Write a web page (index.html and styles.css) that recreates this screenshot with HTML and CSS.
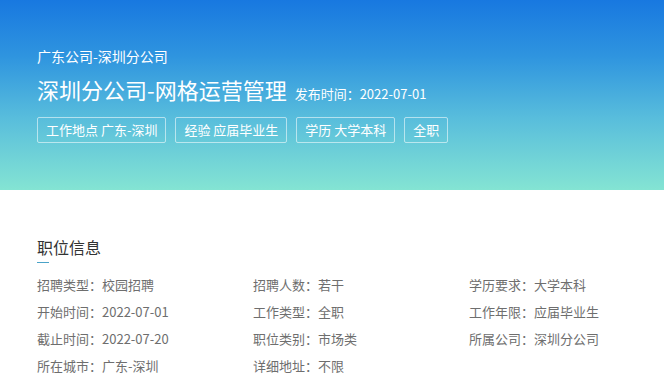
FILE: index.html
```html
<!DOCTYPE html>
<html lang="zh-CN">

<head>
    <meta charset="UTF-8">
    <meta name="viewport" content="width=device-width, initial-scale=1.0">
    <title>深圳分公司-网格运营管理</title>
    <link rel="stylesheet" href="styles.css">
</head>

<body>
    <div class="banner">
        <div class="company">广东公司-深圳分公司</div>
        <div class="title-line">
            <h1>深圳分公司-网格运营管理</h1>
            <span class="pub-date">发布时间：2022-07-01</span>
        </div>
        <div class="tags">
            <span class="tag">工作地点 广东-深圳</span>
            <span class="tag">经验 应届毕业生</span>
            <span class="tag">学历 大学本科</span>
            <span class="tag">全职</span>
        </div>
    </div>

    <div class="info">
        <h2>职位信息</h2>
        <div class="underline"></div>
        <div class="info-grid">
            <div class="item">招聘类型：校园招聘</div>
            <div class="item">招聘人数：若干</div>
            <div class="item">学历要求：大学本科</div>
            <div class="item">开始时间：2022-07-01</div>
            <div class="item">工作类型：全职</div>
            <div class="item">工作年限：应届毕业生</div>
            <div class="item">截止时间：2022-07-20</div>
            <div class="item">职位类别：市场类</div>
            <div class="item">所属公司：深圳分公司</div>
            <div class="item">所在城市：广东-深圳</div>
            <div class="item">详细地址：不限</div>
        </div>
    </div>
</body>

</html>
```

FILE: styles.css
```css
body {
    margin: 0;
    font-family: "Noto Sans CJK SC", "Noto Sans", sans-serif;
    background: #fff;
    overflow: hidden;
}

.banner {
    height: 190px;
    box-sizing: border-box;
    padding: 46px 0 0 37px;
    background: linear-gradient(180deg, #1878e0 0%, #2f95df 30%, #58bddc 62%, #84e4d3 100%);
    color: #fff;
}

.company {
    font-size: 14px;
    line-height: 20px;
}

.title-line {
    display: flex;
    align-items: baseline;
    margin-top: 8px;
}

h1 {
    margin: 0;
    font-size: 22px;
    font-weight: normal;
    line-height: 30px;
}

.pub-date {
    margin-left: 8px;
    font-size: 13px;
}

.tags {
    display: flex;
    gap: 9px;
    margin-top: 13px;
}

.tag {
    height: 26px;
    line-height: 24px;
    box-sizing: border-box;
    padding: 0 8px;
    border: 1px solid rgba(255, 255, 255, 0.55);
    border-radius: 2px;
    font-size: 13px;
    white-space: nowrap;
}

.info {
    padding: 46px 0 0 37px;
}

h2 {
    margin: 0;
    font-size: 16px;
    font-weight: normal;
    line-height: 22px;
    color: #333;
}

.underline {
    width: 12px;
    height: 1px;
    margin-top: 4px;
    background: #4aa3c8;
}

.info-grid {
    display: grid;
    grid-template-columns: 216px 216px 216px;
    margin-top: 8px;
}

.item {
    font-size: 13px;
    line-height: 27px;
    color: #6e6e6e;
    white-space: nowrap;
}
```
